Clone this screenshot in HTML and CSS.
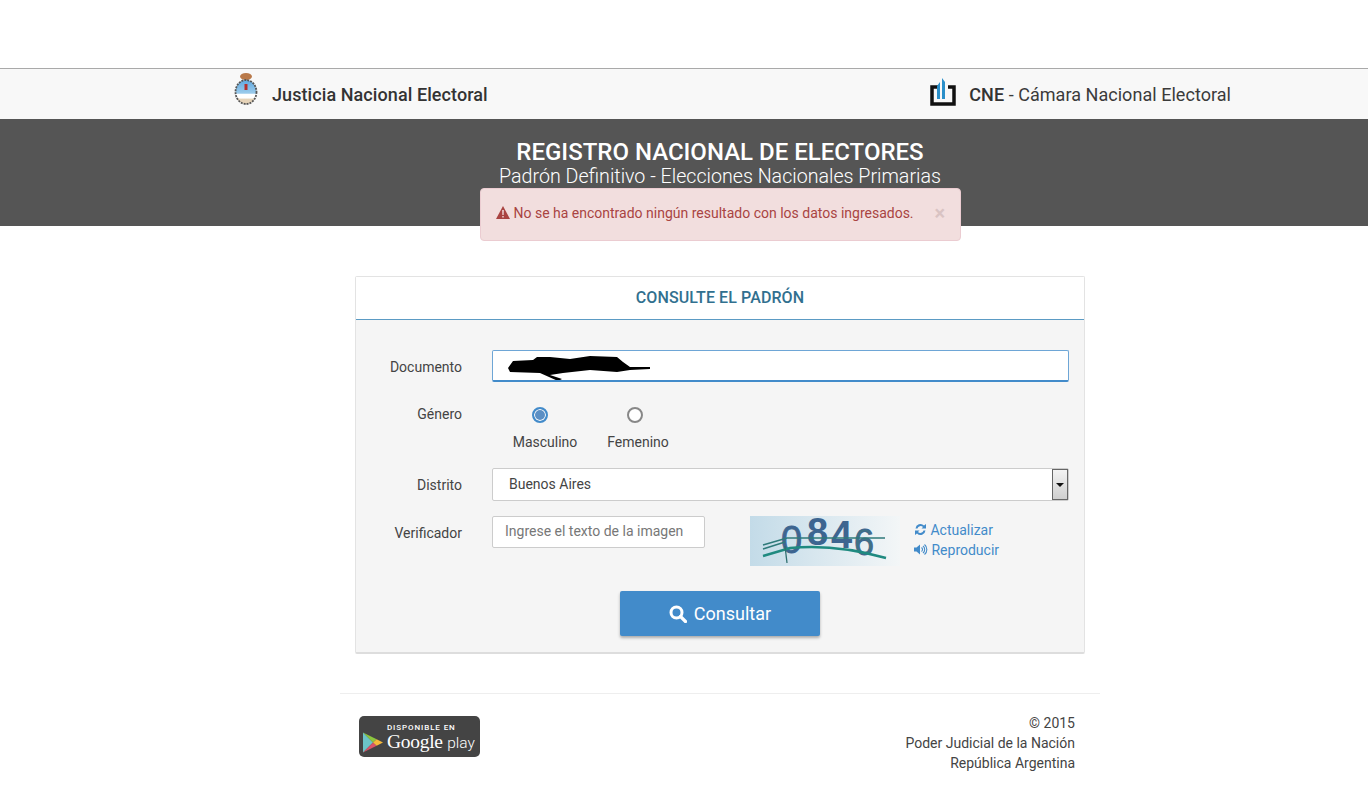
FILE: index.html
```html
<!DOCTYPE html>
<html lang="es">
<head>
    <meta charset="UTF-8">
    <meta name="viewport" content="width=device-width, initial-scale=1.0">
    <title>Registro Nacional de Electores</title>
    <link rel="stylesheet" href="styles.css">
</head>
<body>
    <div class="topbar">
        <div class="topbar-left">
            <svg class="escudo" width="26" height="34" viewBox="0 0 26 34">
                <defs>
                    <linearGradient id="cielo" x1="0" x2="0" y1="0" y2="1">
                        <stop offset="0" stop-color="#5fa8e0"/>
                        <stop offset=".55" stop-color="#9ccbeb"/>
                        <stop offset=".6" stop-color="#fff"/>
                        <stop offset=".75" stop-color="#fff"/>
                        <stop offset=".8" stop-color="#e6d3b8"/>
                        <stop offset="1" stop-color="#e6d3b8"/>
                    </linearGradient>
                </defs>
                <ellipse cx="13" cy="4.500" rx="6" ry="3.500" fill="#b9794a"/>
                <ellipse cx="13" cy="20" rx="10.500" ry="12" fill="url(#cielo)" stroke="#555" stroke-width="1.800" stroke-dasharray="2 1"/>
                <rect x="11.500" y="12" width="3" height="6" fill="#b5302c"/>
            </svg>
            <strong>Justicia Nacional Electoral</strong>
        </div>
        <div class="topbar-right">
            <svg class="logo-cne" width="26" height="28" viewBox="0 0 26 28">
                <path d="M8 9H2v17h22V9h-6" fill="none" stroke="#111" stroke-width="3.500"/>
                <path d="M7 21V8l3-4v17zM12 21V0l3 4v17z" fill="#2a8fc9"/>
            </svg>
            <span><strong>CNE</strong> - Cámara Nacional Electoral</span>
        </div>
    </div>

    <div class="banner">
        <h1>REGISTRO NACIONAL DE ELECTORES</h1>
        <p>Padrón Definitivo - Elecciones Nacionales Primarias</p>
        <div class="alert">
            <span class="alert-text">
                <svg width="14" height="13" viewBox="0 0 14 13"><path d="M7 0l7 13H0z" fill="#a94442"/><path d="M6.200 4h1.600l-.2 5H6.400zM6.300 10h1.400v1.600H6.300z" fill="#f2dede"/></svg>
                No se ha encontrado ningún resultado con los datos ingresados.
            </span>
            <span class="alert-close">×</span>
        </div>
    </div>

    <div class="panel">
        <div class="panel-title">CONSULTE EL PADRÓN</div>
        <form class="panel-body">
            <div class="row row-doc">
                <label>Documento</label>
                <div class="doc-input">
                    <svg width="160" height="28" viewBox="0 0 160 28">
                        <path d="M15 15L20 8 40 7 44 4H57L77 6 97 3 124 4 130 9 137 14H157V16L137 17 124 19 97 17 70 20 57 22 69 26 65 28 47 20 17 19z" fill="#000"/>
                    </svg>
                </div>
            </div>
            <div class="row row-genero">
                <label>Género</label>
                <div class="radios">
                    <div class="radio radio-m"><span class="dot dot-on"></span>Masculino</div>
                    <div class="radio radio-f"><span class="dot"></span>Femenino</div>
                </div>
            </div>
            <div class="row row-distrito">
                <label>Distrito</label>
                <div class="select">
                    <span>Buenos Aires</span>
                    <span class="select-arrow"></span>
                </div>
            </div>
            <div class="row row-verif">
                <label>Verificador</label>
                <div class="verif-input">Ingrese el texto de la imagen</div>
                <svg class="captcha" width="150" height="50" viewBox="0 0 150 50">
                    <defs>
                        <linearGradient id="cap" x1="0" x2="1" y1="0" y2="0">
                            <stop offset="0" stop-color="#c3dbe8"/>
                            <stop offset="1" stop-color="#f3f6f7"/>
                        </linearGradient>
                    </defs>
                    <rect width="150" height="50" fill="url(#cap)"/>
                    <text class="cap-num cap-thick" x="31" y="37" font-size="38" fill="#3d6590">0</text>
                    <text class="cap-num cap-bold" x="57" y="29" font-size="38" fill="#3d6590">8</text>
                    <text class="cap-num cap-bold" x="81" y="32" font-size="38" fill="#3d6590">4</text>
                    <text class="cap-num cap-thick" x="104" y="39" font-size="36" fill="#3f7285">6</text>
                    <path d="M13 29L37 22 135 22M13 33L35 26" fill="none" stroke="#2f7a7a" stroke-width="1.500"/>
                    <path d="M13 40L40 32C60 30 90 29 136 42" fill="none" stroke="#1f8a80" stroke-width="2.400"/>
                    <path d="M35 30l2 17" stroke="#2f6f6f" stroke-width="1.300"/>
                </svg>
                <div class="captcha-links">
                    <a>
                        <svg width="13" height="13" viewBox="0 0 13 13"><path d="M1.500 5.500A5 5 0 0 1 10 2.500L12 1v4.500H7.500L9 4a3.300 3.300 0 0 0-5.500 1.500zM11.500 7.500A5 5 0 0 1 3 10.500L1 12V7.500h4.500L4 9a3.300 3.300 0 0 0 5.500-1.500z" fill="#428bca"/></svg>
                        Actualizar
                    </a>
                    <a>
                        <svg width="14" height="13" viewBox="0 0 14 13"><path d="M0 4.500h2.500L6 1.500v10L2.500 8.500H0z" fill="#428bca"/><path d="M7.500 4.500a2.500 2.500 0 0 1 0 4M9 3a4.500 4.500 0 0 1 0 7M10.500 1.500a6.500 6.500 0 0 1 0 10" fill="none" stroke="#428bca" stroke-width="1.100"/></svg>
                        Reproducir
                    </a>
                </div>
            </div>
            <div class="submit-wrap">
                <button type="button" class="btn-consultar">
                    <svg width="18" height="18" viewBox="0 0 18 18"><circle cx="7.500" cy="7.500" r="5.500" fill="none" stroke="#fff" stroke-width="3"/><path d="M11.500 11.500l5 5" stroke="#fff" stroke-width="3.200" stroke-linecap="round"/></svg>
                    Consultar
                </button>
            </div>
        </form>
    </div>

    <div class="footer">
        <div class="badge">
            <svg class="badge-play" width="20" height="21" viewBox="0 0 22 22">
                <path d="M0 0l11 11L0 22z" fill="#6cc4c8"/>
                <path d="M0 0l15 7.500L11 11z" fill="#8cc63f"/>
                <path d="M0 22l15-7.500L11 11z" fill="#d9546a"/>
                <path d="M15 7.500L22 11l-7 3.500L11 11z" fill="#f5b93a"/>
            </svg>
            <div class="badge-text">
                <span class="badge-small">DISPONIBLE EN</span>
                <span class="badge-big">Google <i>play</i></span>
            </div>
        </div>
        <div class="footer-text">
            <div>© 2015</div>
            <div>Poder Judicial de la Nación</div>
            <div>República Argentina</div>
        </div>
    </div>
</body>
</html>
```

FILE: styles.css
```css
body { margin: 0; padding-top: 68px; background: #fff; font-family: Roboto, "Liberation Sans", sans-serif; font-size: 14px; color: #333; }

.topbar { height: 50px; border-top: 1px solid #a9a9a9; background: #f8f8f8; display: flex; justify-content: space-between; align-items: center; padding: 0 137px 0 233px; font-size: 18px; }
.topbar-left, .topbar-right { display: flex; align-items: center; }
.topbar strong { font-weight: 500; }
.topbar-left strong { letter-spacing: .08px; }
.escudo { margin-right: 13px; margin-top: -10px; }
.logo-cne { margin-right: 13px; margin-top: -4px; }
.topbar-right span { color: #3b3b3b; letter-spacing: .04px; }
.topbar-right strong { color: #333; }

.banner { position: relative; height: 107px; background: #555; color: #fff; text-align: center; box-sizing: border-box; padding: 19px 0 0 72px; }
.banner h1 { margin: 0; font-size: 24px; line-height: 29px; font-weight: 500; }
.banner p { margin: 0; font-size: 19.65px; line-height: 19px; font-weight: 300; }

.alert { position: absolute; left: 480px; top: 69px; width: 481px; height: 53px; box-sizing: border-box; padding: 0 15px 4px; display: flex; align-items: center; justify-content: space-between; background: #f2dede; border: 1px solid #ebccd1; border-radius: 4px; color: #a94442; font-size: 14px; text-align: left; }
.alert svg { vertical-align: -1px; }
.alert-close { font-size: 20px; font-weight: 700; color: #d9c3c3; }

.panel { width: 730px; box-sizing: border-box; margin: 50px 0 0 355px; border: 1px solid #e3e3e3; border-bottom: 2px solid #ddd; background: #f5f5f5; border-radius: 2px; }
.panel-title { height: 43px; box-sizing: border-box; line-height: 42px; text-align: center; background: #fff; border-bottom: 1px solid #5b9bc4; color: #31708f; font-weight: 500; font-size: 16px; letter-spacing: .1px; }
.panel-body { padding: 30px 15px 16px 0; display: flex; flex-direction: column; }

.row { display: flex; }
.row label { width: 106px; margin-right: 30px; text-align: right; color: #444; }
.row-doc { height: 32px; }
.row-doc label { line-height: 35px; }
.doc-input { flex: 1; height: 32px; box-sizing: border-box; background: #fff; border: 1px solid #6ea6d6; border-bottom: 2px solid #428bca; border-radius: 2px; overflow: hidden; }
.doc-input svg { display: block; margin-top: 2px; }

.row-genero { margin-top: 23px; height: 63px; }
.row-genero label { line-height: 18px; }
.radios { display: flex; }
.radio { display: flex; flex-direction: column; align-items: center; color: #444; width: 94px; margin-top: 2px; }
.radio-m { margin-left: 6px; }
.radio-f { margin-left: -1px; }
.dot { width: 16px; height: 16px; box-sizing: border-box; border: 2px solid #888; border-radius: 50%; background: #fff; margin: 0 6px 11px 0; }
.dot-on { border-color: #428bca; background: #5b8fc4; box-shadow: inset 0 0 0 1px #fff; margin-right: 10px; }

.row-distrito label { line-height: 34px; }
.select { flex: 1; height: 33px; box-sizing: border-box; display: flex; justify-content: space-between; align-items: center; padding-left: 17px; background: #fff; border: 1px solid #ccc; border-radius: 2px; color: #444; }
.select > span:first-child { margin: -2px 0 0 -1px; }
.select-arrow { width: 16px; height: 31px; box-sizing: border-box; border: 1px solid #666; background: linear-gradient(#f3f3f3, #cfcfcf); position: relative; }
.select-arrow::after { content: ""; position: absolute; left: 3px; top: 13px; border: 4px solid transparent; border-top: 4px solid #111; }

.row-verif { margin-top: 14px; height: 50px; }
.row-verif label { line-height: 34px; }
.verif-input { width: 213px; height: 32px; line-height: 29px; box-sizing: border-box; padding-left: 12px; background: #fff; border: 1px solid #ccc; border-radius: 2px; color: #777; }
.captcha { margin-left: 45px; overflow: visible; }
.cap-num { font-family: "Liberation Sans", sans-serif; }
.cap-bold { font-weight: 700; }
.cap-thick { stroke: #3d6590; stroke-width: .8px; }
.captcha-links { margin-left: 14px; display: flex; flex-direction: column; color: #428bca; line-height: 20px; padding-top: 4px; }
.captcha-links a { white-space: nowrap; }
.captcha-links svg { vertical-align: -1px; }

.submit-wrap { display: flex; justify-content: center; margin: 25px 0 0 15px; }
.btn-consultar { width: 200px; height: 45px; display: flex; align-items: center; justify-content: center; gap: 7px; background: #428bca; color: #fff; border: 0; border-radius: 2px; font: 400 18px Roboto, sans-serif; box-shadow: 0 2px 3px rgba(0,0,0,.3); }

.footer { width: 760px; box-sizing: border-box; margin: 39px 0 0 340px; padding: 22px 25px 0 19px; border-top: 1px solid #eee; display: flex; justify-content: space-between; align-items: flex-start; }
.badge { width: 121px; height: 41px; box-sizing: border-box; background: #444; border-radius: 5px; color: #fff; display: flex; align-items: flex-end; padding: 0 0 4px 4px; }
.badge-play { margin-right: 4px; }
.badge-text { display: flex; flex-direction: column; line-height: 1; }
.badge-small { font-size: 8px; font-weight: 500; letter-spacing: .9px; margin-bottom: -1px; }
.badge-big { font: 19.5px/22px "Liberation Serif", serif; letter-spacing: -.3px; white-space: nowrap; }
.badge-big i { font: 300 15.5px Roboto, sans-serif; letter-spacing: 0; }
.footer-text { text-align: right; line-height: 20px; color: #444; margin-top: -3px; }
```
